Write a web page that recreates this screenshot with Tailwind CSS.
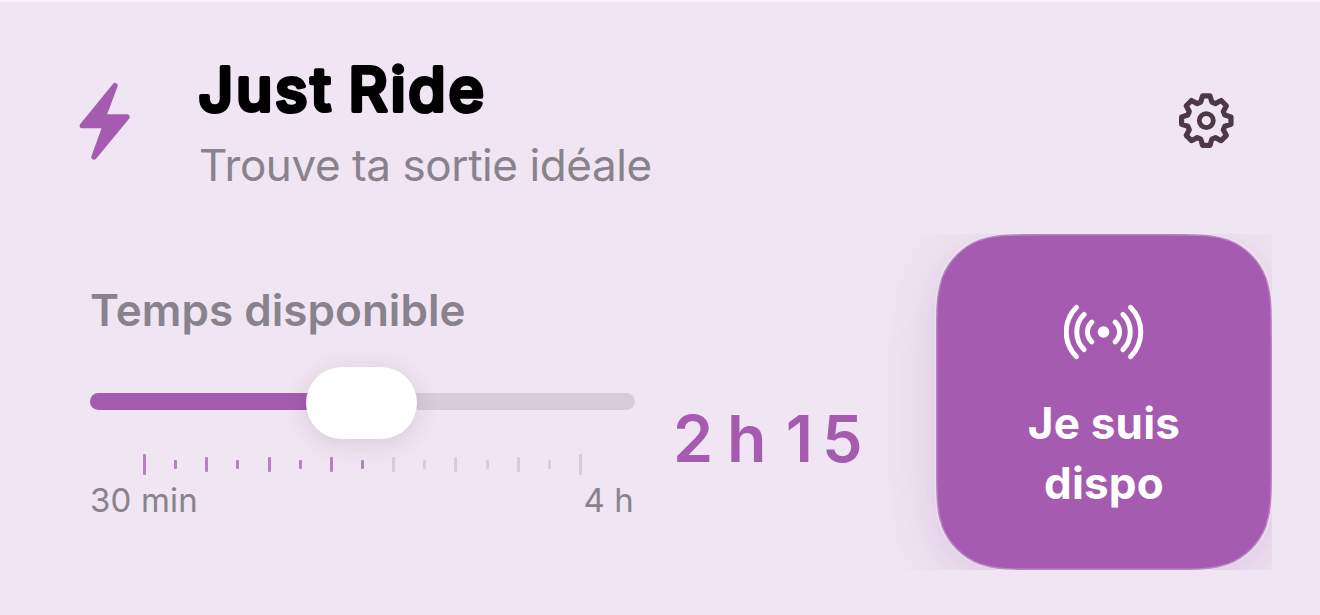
<!DOCTYPE html>
<html lang="fr">
<head>
  <meta charset="UTF-8" />
  <meta name="viewport" content="width=device-width, initial-scale=1.0" />
  <script src="https://cdn.jsdelivr.net/npm/@tailwindcss/browser@4"></script>
  <title>Just Ride</title>
</head>
<body class="h-[615px] overflow-hidden border-t-2 border-[#f7f3f8] bg-[#f0e5f2] font-['Inter',sans-serif]">

  <!-- Header -->
  <header class="flex h-[232px] pl-[79px] pr-[86px]">
    <svg class="mt-[80px] h-[78px] w-[52px] shrink-0" viewBox="58 66 156 234">
      <path d="M166 77 131 171H202L103 291 137 197H68Z" fill="#a45bb0" stroke="#a45bb0" stroke-width="16" stroke-linejoin="round" />
    </svg>
    <div class="ml-[68px] pt-[50px]">
      <h1 class="h-[87px]">
        <svg class="h-[80px] w-[300px] overflow-visible">
          <text x="-0.5" y="59.3" textLength="285.5" class="text-[60.5px] font-medium [word-spacing:-4px]" stroke="#000" stroke-width="4" stroke-linejoin="round">Just Ride</text>
        </svg>
      </h1>
      <p class="text-[44px] leading-[52px] tracking-[-0.42px] whitespace-nowrap text-[#88828b]">Trouve ta sortie idéale</p>
    </div>
    <svg class="mt-[90px] ml-auto h-[56px] w-[56px]" viewBox="-28.3 -28.6 56 56" fill="none" stroke="#4f3846" stroke-width="5.2" stroke-linejoin="round">
      <path d="M-3.7-24.7H3.7L5.6-18.5 9.1-17 14.85-20.1 20.1-14.85 17-9.1 18.5-5.6 24.7-3.7V3.7L18.5 5.6 17 9.1 20.1 14.85 14.85 20.1 9.1 17 5.6 18.5 3.7 24.7H-3.7L-5.6 18.5-9.1 17-14.85 20.1-20.1 14.85-17 9.1-18.5 5.6-24.7 3.7V-3.7L-18.5-5.6-17-9.1-20.1-14.85-14.85-20.1-9.1-17-5.6-18.5Z" />
      <circle r="7" stroke-width="4.8" />
    </svg>
  </header>

  <main class="flex pl-[90px]">
    <!-- Time slider -->
    <section class="w-[545px] shrink-0 pt-[50px]">
      <h2 class="text-[44px] leading-[52px] font-semibold tracking-[0.05px] whitespace-nowrap text-[#88828b]">Temps disponible</h2>
      <div class="relative mt-[57px] h-[17px] rounded-full bg-[#d9ccd9]">
        <div class="h-full w-[250px] rounded-full bg-[#a45bb0]"></div>
        <div class="absolute top-[-26px] left-[216px] h-[72px] w-[111px] rounded-full bg-white shadow-[0_4px_24px_rgba(80,50,60,0.15)]"></div>
      </div>
      <div class="mt-[44px] ml-[53px] flex h-[21px] w-[439px] items-center justify-between">
        <i class="h-[21px] w-[3px] rounded-[1px] bg-[#b97fc4]"></i>
        <i class="h-[9px] w-[3px] rounded-[1px] bg-[#b97fc4]"></i>
        <i class="h-[15px] w-[3px] rounded-[1px] bg-[#b97fc4]"></i>
        <i class="h-[9px] w-[3px] rounded-[1px] bg-[#b97fc4]"></i>
        <i class="h-[15px] w-[3px] rounded-[1px] bg-[#b97fc4]"></i>
        <i class="h-[9px] w-[3px] rounded-[1px] bg-[#b97fc4]"></i>
        <i class="h-[15px] w-[3px] rounded-[1px] bg-[#b97fc4]"></i>
        <i class="h-[9px] w-[3px] rounded-[1px] bg-[#b97fc4]"></i>
        <i class="h-[15px] w-[3px] rounded-[1px] bg-[#d9ccd9]"></i>
        <i class="h-[9px] w-[3px] rounded-[1px] bg-[#d9ccd9]"></i>
        <i class="h-[15px] w-[3px] rounded-[1px] bg-[#d9ccd9]"></i>
        <i class="h-[9px] w-[3px] rounded-[1px] bg-[#d9ccd9]"></i>
        <i class="h-[15px] w-[3px] rounded-[1px] bg-[#d9ccd9]"></i>
        <i class="h-[9px] w-[3px] rounded-[1px] bg-[#d9ccd9]"></i>
        <i class="h-[21px] w-[3px] rounded-[1px] bg-[#d9ccd9]"></i>
      </div>
      <div class="mt-[5px] flex justify-between pr-[1px] text-[33px] leading-[40px] tracking-[0.15px] text-[#88828b]">
        <span>30 min</span>
        <span>4 h</span>
      </div>
    </section>

    <p class="w-[221px] shrink-0 pt-[166px] pl-[38px] text-[64.5px] leading-[78px] font-semibold whitespace-nowrap text-[#a45bb0]"><span class="[word-spacing:-2.5px]">2 h</span> <span class="ml-[3px] tracking-[9px]">1</span>5</p>

    <!-- Start button -->
    <button class="relative h-[336px] w-[416px] shrink-0 pl-[80px] text-white">
      <svg class="absolute top-0 left-0 h-[336px] w-[416px] overflow-hidden" viewBox="-80 0 416 336">
        <path class="drop-shadow-[0_12px_28px_rgba(150,91,166,0.25)]" fill="#a45bb0" d="M107 0H229C259.8 0 275.2 0 289.1 4.6L291.8 5.2C309.9 11.8 324.2 26.1 330.8 44.2L331.4 46.9C336 60.8 336 76.2 336 107V229C336 259.8 336 275.2 331.4 289.1L330.8 291.8C324.2 309.9 309.9 324.2 291.8 330.8L289.1 331.4C275.2 336 259.8 336 229 336H107C76.2 336 60.8 336 46.9 331.4L44.2 330.8C26.1 324.2 11.8 309.9 5.2 291.8L4.6 289.1C0 275.2 0 259.8 0 229V107C0 76.2 0 60.8 4.6 46.9L5.2 44.2C11.8 26.1 26.1 11.8 44.2 5.2L46.9 4.6C60.8 0 76.2 0 107 0Z" />
        <path fill="none" stroke="#fff" stroke-opacity=".25" stroke-width="3" d="M107 0H229C259.8 0 275.2 0 289.1 4.6L291.8 5.2C309.9 11.8 324.2 26.1 330.8 44.2L331.4 46.9C336 60.8 336 76.2 336 107V229C336 259.8 336 275.2 331.4 289.1L330.8 291.8C324.2 309.9 309.9 324.2 291.8 330.8L289.1 331.4C275.2 336 259.8 336 229 336H107C76.2 336 60.8 336 46.9 331.4L44.2 330.8C26.1 324.2 11.8 309.9 5.2 291.8L4.6 289.1C0 275.2 0 259.8 0 229V107C0 76.2 0 60.8 4.6 46.9L5.2 44.2C11.8 26.1 26.1 11.8 44.2 5.2L46.9 4.6C60.8 0 76.2 0 107 0Z" />
      </svg>
      <span class="relative flex h-full flex-col items-center pt-[70px]">
        <svg class="h-[56px] w-[80px]" viewBox="-39.5 -28 80 56" fill="none" stroke="#fff" stroke-width="5" stroke-linecap="round">
          <circle r="5.8" fill="#fff" stroke="none" />
          <path d="M11.7-9.8A13.3 13.3 0 0 1 11.7 9.8M19.5-17.6A25 25 0 0 1 19.5 17.6M27.2-24.6A35 35 0 0 1 27.2 24.6M-11.7-9.8A13.3 13.3 0 0 0-11.7 9.8M-19.5-17.6A25 25 0 0 0-19.5 17.6M-27.2-24.6A35 35 0 0 0-27.2 24.6" />
        </svg>
        <span class="mt-[33px] text-[44px] leading-[60px] font-bold tracking-[0.2px]">Je suis<br />dispo</span>
      </span>
    </button>
  </main>
</body>
</html>
